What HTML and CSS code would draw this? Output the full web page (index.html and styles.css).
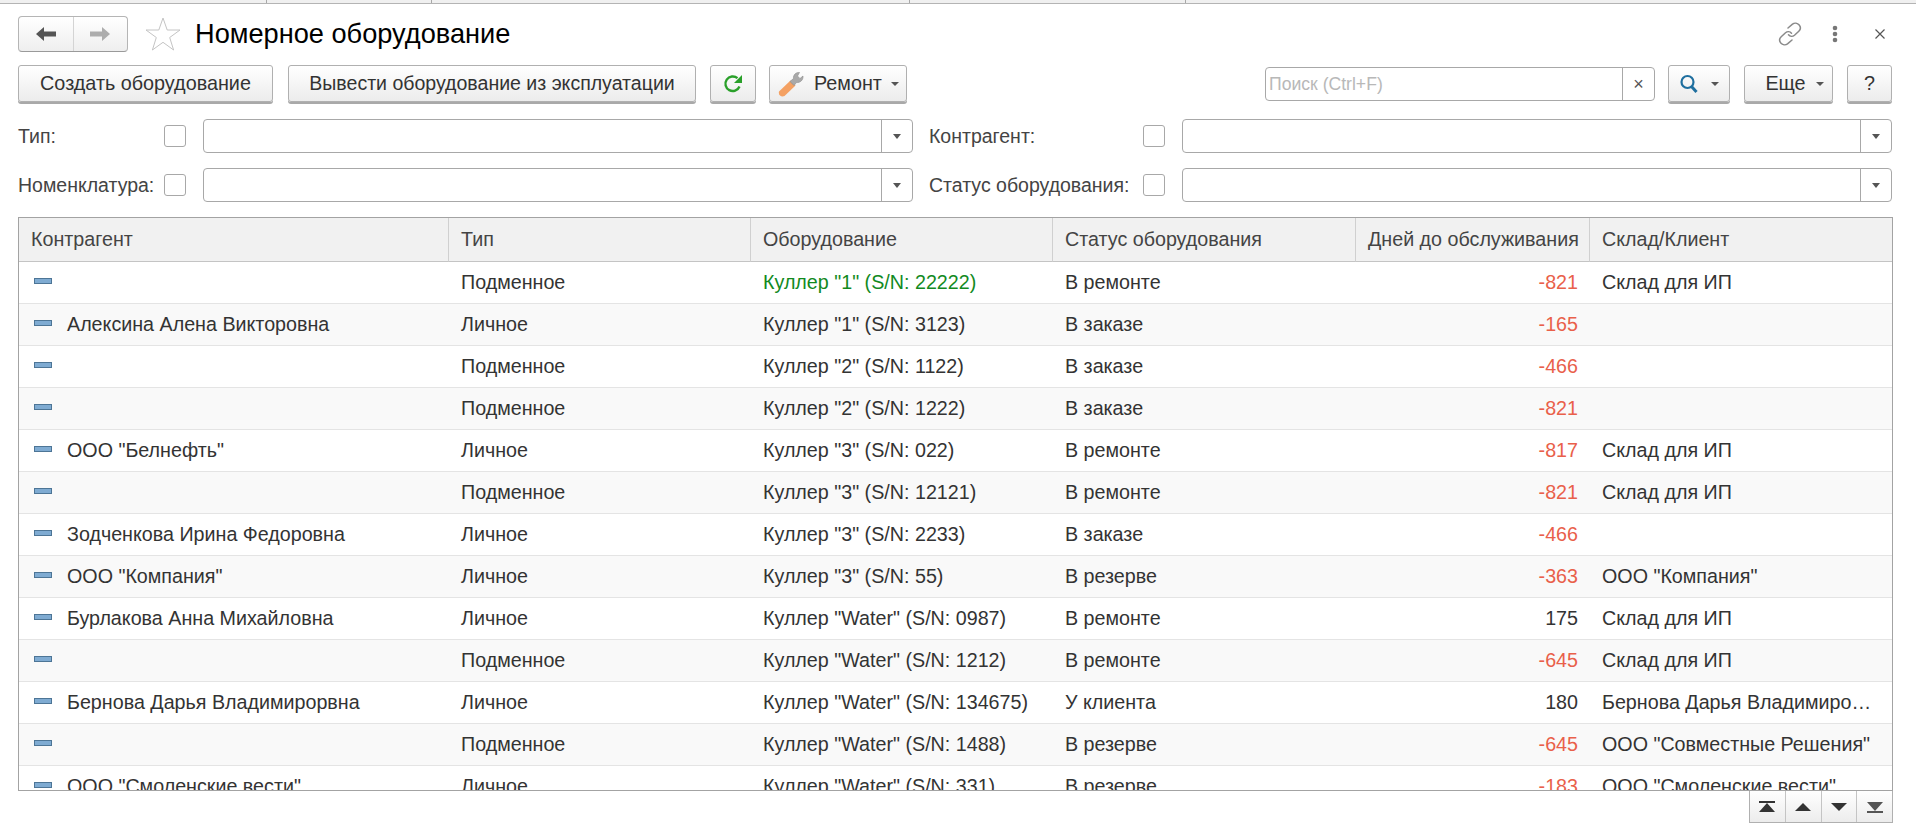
FILE: index.html
```html
<!DOCTYPE html>
<html lang="ru">
<head>
    <meta charset="UTF-8">
    <title>Номерное оборудование</title>
    <link rel="stylesheet" href="styles.css">
</head>
<body>
    <div class="tabs">
        <div class="tab tab-1"></div>
        <div class="tab tab-2"></div>
        <div class="tab tab-3"></div>
        <div class="tab tab-4"></div>
    </div>

    <div class="page">
        <div class="head">
            <div class="nav">
                <span class="nav-btn">
                    <svg width="20" height="14" viewBox="0 0 20 14"><path d="M0 7 8 0V4.500H20V9.500H8V14Z" fill="#555"/></svg>
                </span>
                <span class="nav-btn">
                    <svg width="20" height="14" viewBox="0 0 20 14"><path d="M20 7 12 0V4.500H0V9.500H12V14Z" fill="#adadad"/></svg>
                </span>
            </div>
            <svg class="star" width="36" height="34" viewBox="0 0 36 34"><path d="M18 1 22.200 13H35L24.700 20.500 28.600 33 18 25.300 7.400 33 11.300 20.500 1 13H13.800Z" fill="#fff" stroke="#c4c4c4"/></svg>
            <h1 class="title">Номерное оборудование</h1>
            <div class="head-tools">
                <svg width="24" height="24" viewBox="0 0 24 24" fill="none" stroke="#8a8a8a" stroke-width="1.500" stroke-linecap="round"><path d="M10 6 14.500 2.200C16.500.6 19.500 1 21.200 3 22.800 5 22.500 7.600 20.800 9.200L16.500 13.200C14.600 14.800 12 14.500 10.500 12.800"/><path d="M14 18 9.500 21.800C7.500 23.400 4.500 23 2.800 21 1.200 19 1.500 16.400 3.200 14.800L7.500 10.800C9.400 9.200 12 9.500 13.500 11.200"/></svg>
                <svg class="dots" width="6" height="18" viewBox="0 0 6 18" fill="#777"><circle cx="3" cy="3" r="2.300"/><circle cx="3" cy="9" r="2.300"/><circle cx="3" cy="15" r="2.300"/></svg>
                <svg class="close" width="10" height="10" viewBox="0 0 10 10" stroke="#555" stroke-width="1.200"><path d="M.5.5 9.500 9.500M9.500.5.5 9.500"/></svg>
            </div>
        </div>

        <div class="toolbar">
            <button class="btn btn-create">Создать оборудование</button>
            <button class="btn btn-retire">Вывести оборудование из эксплуатации</button>
            <button class="btn btn-refresh">
                <svg width="20" height="20" viewBox="0 0 20 20" fill="none"><path d="M16.500 12.500A7.300 7.300 0 1 1 14.500 4.200" stroke="#2aa02a" stroke-width="2.400"/><path d="M19 1V9H11Z" fill="#2aa02a"/></svg>
            </button>
            <button class="btn btn-repair">
                <svg width="26" height="26" viewBox="0 0 26 26"><path d="M1 20.500 12.500 9.500 17.500 14.500 6.500 25C3.500 26.500 0 24 1 20.500Z" fill="#f4a163"/><path d="M12 10.500 15.500 7.500C15 4 18 1 21.500 1.500L19.500 5 22 7.500 25 5C25.500 9 22 12 18.500 11.500L16 14.500Z" fill="#a9a9a9" stroke="#8c8c8c" stroke-width=".6"/></svg>
                <span class="btn-text">Ремонт</span>
                <span class="caret caret-near"></span>
            </button>
            <div class="search">
                <input class="search-input" type="text" placeholder="Поиск (Ctrl+F)">
                <span class="search-clear">×</span>
            </div>
            <button class="btn btn-find">
                <svg width="20" height="20" viewBox="0 0 20 20" fill="none" stroke="#1f6f9f"><circle cx="8.500" cy="8" r="6" stroke-width="2.200"/><path d="M12.500 12.500 17.500 18" stroke-width="3"/></svg>
                <span class="caret"></span>
            </button>
            <button class="btn btn-more">Еще<span class="caret"></span></button>
            <button class="btn btn-help">?</button>
        </div>

        <div class="filters">
            <label class="flabel">Тип:</label>
            <span class="check"></span>
            <div class="field"><span class="field-drop"><span class="caret-dark"></span></span></div>
            <span></span>
            <label class="flabel">Контрагент:</label>
            <span class="check"></span>
            <div class="field"><span class="field-drop"><span class="caret-dark"></span></span></div>

            <label class="flabel">Номенклатура:</label>
            <span class="check"></span>
            <div class="field"><span class="field-drop"><span class="caret-dark"></span></span></div>
            <span></span>
            <label class="flabel">Статус оборудования:</label>
            <span class="check"></span>
            <div class="field"><span class="field-drop"><span class="caret-dark"></span></span></div>
        </div>

        <div class="grid-wrap">
            <table class="grid">
                <colgroup>
                    <col class="col-a"><col class="col-b"><col class="col-b"><col class="col-c"><col class="col-d"><col class="col-b">
                </colgroup>
                <thead>
                    <tr><th>Контрагент</th><th>Тип</th><th>Оборудование</th><th>Статус оборудования</th><th>Дней до обслуживания</th><th>Склад/Клиент</th></tr>
                </thead>
                <tbody>
                    <tr class="active"><td class="who"><i class="mark"></i></td><td>Подменное</td><td class="current">Куллер "1" (S/N: 22222)</td><td>В ремонте</td><td class="days neg">-821</td><td>Склад для ИП</td></tr>
                    <tr><td class="who"><i class="mark"></i>Алексина Алена Викторовна</td><td>Личное</td><td>Куллер "1" (S/N: 3123)</td><td>В заказе</td><td class="days neg">-165</td><td></td></tr>
                    <tr><td class="who"><i class="mark"></i></td><td>Подменное</td><td>Куллер "2" (S/N: 1122)</td><td>В заказе</td><td class="days neg">-466</td><td></td></tr>
                    <tr><td class="who"><i class="mark"></i></td><td>Подменное</td><td>Куллер "2" (S/N: 1222)</td><td>В заказе</td><td class="days neg">-821</td><td></td></tr>
                    <tr><td class="who"><i class="mark"></i>ООО "Белнефть"</td><td>Личное</td><td>Куллер "3" (S/N: 022)</td><td>В ремонте</td><td class="days neg">-817</td><td>Склад для ИП</td></tr>
                    <tr><td class="who"><i class="mark"></i></td><td>Подменное</td><td>Куллер "3" (S/N: 12121)</td><td>В ремонте</td><td class="days neg">-821</td><td>Склад для ИП</td></tr>
                    <tr><td class="who"><i class="mark"></i>Зодченкова Ирина Федоровна</td><td>Личное</td><td>Куллер "3" (S/N: 2233)</td><td>В заказе</td><td class="days neg">-466</td><td></td></tr>
                    <tr><td class="who"><i class="mark"></i>ООО "Компания"</td><td>Личное</td><td>Куллер "3" (S/N: 55)</td><td>В резерве</td><td class="days neg">-363</td><td>ООО "Компания"</td></tr>
                    <tr><td class="who"><i class="mark"></i>Бурлакова Анна Михайловна</td><td>Личное</td><td>Куллер "Water" (S/N: 0987)</td><td>В ремонте</td><td class="days">175</td><td>Склад для ИП</td></tr>
                    <tr><td class="who"><i class="mark"></i></td><td>Подменное</td><td>Куллер "Water" (S/N: 1212)</td><td>В ремонте</td><td class="days neg">-645</td><td>Склад для ИП</td></tr>
                    <tr><td class="who"><i class="mark"></i>Бернова Дарья Владимирорвна</td><td>Личное</td><td>Куллер "Water" (S/N: 134675)</td><td>У клиента</td><td class="days">180</td><td>Бернова Дарья Владимирорвна</td></tr>
                    <tr><td class="who"><i class="mark"></i></td><td>Подменное</td><td>Куллер "Water" (S/N: 1488)</td><td>В резерве</td><td class="days neg">-645</td><td>ООО "Совместные Решения"</td></tr>
                    <tr><td class="who"><i class="mark"></i>ООО "Смоленские вести"</td><td>Личное</td><td>Куллер "Water" (S/N: 331)</td><td>В резерве</td><td class="days neg">-183</td><td>ООО "Смоленские вести"</td></tr>
                </tbody>
            </table>
        </div>

        <div class="pager">
            <span class="pager-btn"><svg width="16" height="12" viewBox="0 0 16 12" fill="#333"><path d="M0 0H16V2H0ZM8 2 16 11H0Z"/></svg></span>
            <span class="pager-btn"><svg width="16" height="10" viewBox="0 0 16 10" fill="#333"><path d="M8 1 16 9H0Z"/></svg></span>
            <span class="pager-btn"><svg width="16" height="10" viewBox="0 0 16 10" fill="#333"><path d="M8 9 16 1H0Z"/></svg></span>
            <span class="pager-btn"><svg width="16" height="12" viewBox="0 0 16 12" fill="#555"><path d="M0 10H16V12H0ZM8 10 16 1H0Z"/></svg></span>
        </div>
    </div>
</body>
</html>
```

FILE: styles.css
```css
* {
    box-sizing: border-box;
}
html, body {
    height: 100%;
}
body {
    margin: 0;
    overflow: hidden;
    background: #fff;
    color: #333;
    font-family: "Liberation Sans", Arial, sans-serif;
    font-size: 19.5px;
}

/* tab strip cut off by the window top */
.tabs {
    display: flex;
    height: 4px;
    background: #f0f0f0;
    border-bottom: 1px solid #b4b4b4;
}
.tab {
    border-right: 1px solid #a8a8a8;
}
.tab-1 { width: 267px; }
.tab-2 { width: 165px; }
.tab-3 { width: 478px; }
.tab-4 { width: 276px; }

.page {
    padding: 12px 23px 0 18px;
}

.head {
    display: flex;
    align-items: center;
    height: 36px;
}
.nav {
    display: flex;
    width: 110px;
    height: 36px;
    border: 1px solid #b5b5b5;
    border-bottom-color: #9a9a9a;
    border-radius: 4px;
    background: linear-gradient(#fff, #eee);
}
.nav-btn {
    flex: 1;
    display: flex;
    align-items: center;
    justify-content: center;
}
.nav-btn + .nav-btn {
    border-left: 1px solid #d4d4d4;
}
.star {
    margin-left: 17px;
}
.title {
    margin: 0 0 0 14px;
    color: #000;
    font-size: 27.2px;
    font-weight: normal;
}
.head-tools {
    display: flex;
    align-items: center;
    margin-left: auto;
    padding-right: 8px;
}
.dots {
    margin-left: 30px;
}
.close {
    margin-left: 37px;
}

.toolbar {
    display: flex;
    align-items: flex-start;
    height: 39px;
    margin-top: 13px;
}
.btn {
    display: flex;
    align-items: center;
    justify-content: center;
    height: 37px;
    padding: 0;
    border: 1px solid #b0b0b0;
    border-radius: 3px;
    background: linear-gradient(#fff, #ececec);
    box-shadow: 0 2px 0 #a9a9a9;
    color: #333;
    font: inherit;
    font-size: 19.8px;
}
.btn-create { width: 255px; }
.btn-retire { width: 408px; margin-left: 15px; font-size: 19.55px; }
.btn-refresh { width: 46px; margin-left: 14px; }
.btn-repair { width: 138px; margin-left: 13px; padding-left: 8px; justify-content: flex-start; }
.btn-text { margin-left: 10px; }
.btn-find { width: 62px; margin-left: 13px; }
.btn-more { width: 89px; margin-left: 14px; padding-left: 12px; }
.btn-help { width: 45px; margin-left: 14px; }
.caret {
    display: inline-block;
    margin-left: 12px;
    border-top: 4px solid #555;
    border-left: 4px solid transparent;
    border-right: 4px solid transparent;
}
.btn-more .caret { margin-left: 10px; }
.caret-near { margin-left: 9px; }
.search {
    display: flex;
    width: 390px;
    height: 34px;
    margin: 2px 0 0 358px;
    border: 1px solid #a8a8a8;
    border-radius: 4px;
}
.search-input {
    flex: 1;
    min-width: 0;
    padding: 0 3px;
    border: none;
    background: none;
    font: inherit;
    font-size: 17.6px;
}
.search-input::placeholder {
    color: #b8b8b8;
}
.search-clear {
    width: 32px;
    border-left: 1px solid #a8a8a8;
    color: #555;
    font-size: 18px;
    line-height: 32px;
    text-align: center;
}

.filters {
    display: grid;
    grid-template-columns: 146px 39px 710px 16px 214px 39px 710px;
    grid-auto-rows: 34px;
    row-gap: 15px;
    align-items: center;
    margin-top: 15px;
    color: #444;
}
.check {
    width: 22px;
    height: 22px;
    border: 1px solid #a8a8a8;
    border-radius: 3px;
}
.field {
    display: flex;
    justify-content: flex-end;
    height: 34px;
    border: 1px solid #a8a8a8;
    border-radius: 4px;
}
.field-drop {
    display: flex;
    align-items: center;
    justify-content: center;
    width: 31px;
    border-left: 1px solid #a8a8a8;
}
.caret-dark {
    border-top: 5px solid #555;
    border-left: 4px solid transparent;
    border-right: 4px solid transparent;
}

.grid-wrap {
    height: 574px;
    margin-top: 15px;
    overflow: hidden;
    border: 1px solid #a3a3a3;
    font-size: 19.7px;
}
.grid {
    width: 100%;
    border-collapse: separate;
    border-spacing: 0;
    table-layout: fixed;
}
.col-a { width: 430px; }
.col-b { width: 302px; }
.col-c { width: 303px; }
.col-d { width: 234px; }
.grid th {
    height: 44px;
    padding: 0 12px;
    border-right: 1px solid #d0d0d0;
    border-bottom: 1px solid #c4c4c4;
    background: #f1f1f1;
    color: #444;
    font-weight: normal;
    text-align: left;
    white-space: nowrap;
    overflow: hidden;
}
.grid th:last-child {
    border-right: none;
}
.grid td {
    height: 42px;
    padding: 0 12px;
    border-bottom: 1px solid #e4e4e4;
    white-space: nowrap;
    overflow: hidden;
    text-overflow: ellipsis;
}
.grid td:last-child {
    padding-right: 15px;
}
.grid tbody tr:nth-child(even) td {
    background: #f9f9f9;
}
.grid td.who {
    padding-left: 15px;
}
.mark {
    display: inline-block;
    width: 18px;
    height: 6px;
    margin-right: 15px;
    vertical-align: 5px;
    border: 1px solid #4d7596;
    background: #7fabd2;
}
.grid td.current {
    color: #128a1e;
}
.grid td.days {
    text-align: right;
}
.grid td.neg {
    color: #e9604a;
}

.pager {
    display: flex;
    width: 144px;
    height: 32px;
    margin-left: auto;
    border: 1px solid #b0b0b0;
    border-top: none;
    background: linear-gradient(#fff, #ececec);
}
.pager-btn {
    flex: 1;
    display: flex;
    align-items: center;
    justify-content: center;
}
.pager-btn + .pager-btn {
    border-left: 1px solid #c4c4c4;
}
```
